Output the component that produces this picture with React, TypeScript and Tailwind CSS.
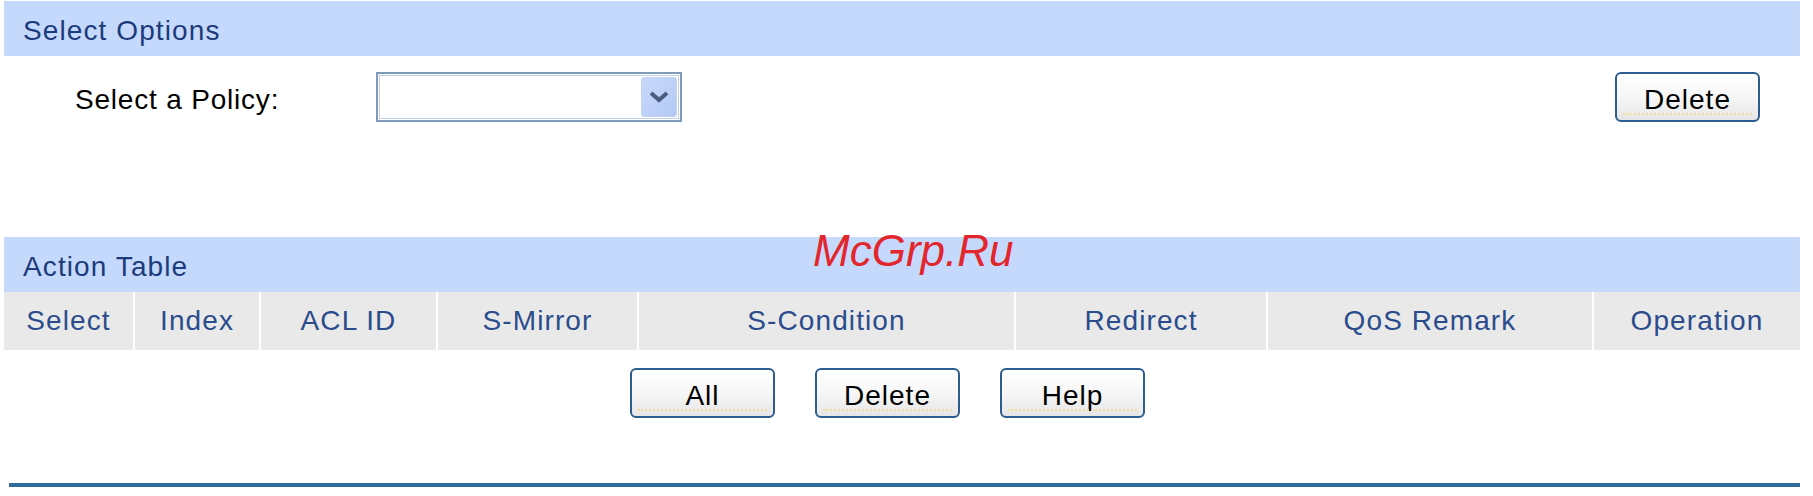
import React from 'react';

const columns = [
  { label: 'Select', w: 'w-[129px]' },
  { label: 'Index', w: 'w-[126px]' },
  { label: 'ACL ID', w: 'w-[177px]' },
  { label: 'S-Mirror', w: 'w-[201px]' },
  { label: 'S-Condition', w: 'w-[377px]' },
  { label: 'Redirect', w: 'w-[252px]' },
  { label: 'QoS Remark', w: 'w-[326px]' },
  { label: 'Operation', w: 'w-[208px]' },
];

function XpButton({ label, className = '' }: { label: string; className?: string }) {
  return (
    <button
      className={`relative w-[145px] h-[50px] pt-[5px] rounded-[6px] border-2 border-[#2b5d8f] bg-gradient-to-b from-white via-[#f7f7f7] to-[#e6e6e6] text-black text-[28px] tracking-[1px] leading-none ${className}`}
    >
      {label}
      <span className="absolute left-[6px] right-[6px] bottom-[5px] border-t-2 border-dotted border-[#f3dc9a]" />
    </button>
  );
}

export default function App() {
  return (
    <div className="relative w-[1813px] h-[496px] bg-white font-['Liberation_Sans',Arial,sans-serif]">
      <div className="pt-px pl-1 w-[1800px]">
        <div className="h-[55px] bg-[#c5d9fd] flex items-center pl-[19px] pt-[4px] text-[28px] tracking-[1.1px] text-[#1c3b7a]">
          Select Options
        </div>

        <div className="mt-[15px] h-[52px] flex items-center">
          <span className="ml-[71px] w-[301px] pt-[6px] text-[28px] tracking-[0.8px] text-black">Select a Policy:</span>
          <div className="w-[306px] h-[50px] border-2 border-[#7f9bbb] shadow-[inset_0_0_0_1px_#fff,inset_0_0_0_2px_#c3d0df] bg-white flex items-center justify-end pr-[3px]">
            <div className="w-[36px] h-[40px] rounded-[3px] bg-gradient-to-br from-[#c9d8fa] to-[#b3c9f6] border border-[#c2d3f4] flex items-center justify-center">
              <svg width="22" height="14" viewBox="0 0 22 14">
                <path d="M3 3 L11 10 L19 3" fill="none" stroke="#4b5d7f" strokeWidth="4" />
              </svg>
            </div>
          </div>
          <XpButton label="Delete" className="ml-auto mr-[40px]" />
        </div>

        <div className="mt-[114px] h-[55px] bg-[#c5d9fd] flex items-center pl-[19px] pt-[4px] text-[28px] tracking-[1.1px] text-[#1c3b7a]">
          Action Table
        </div>

        <div className="flex h-[58px] bg-[#e9e9e9]">
          {columns.map((c, i) => (
            <div
              key={c.label}
              className={`${c.w} flex items-center justify-center text-[28px] tracking-[1.1px] text-[#2b4c8c] ${
                i > 0 ? 'border-l-2 border-white' : ''
              }`}
            >
              {c.label}
            </div>
          ))}
        </div>

        <div className="mt-[18px] flex pl-[626px] gap-[40px]">
          <XpButton label="All" />
          <XpButton label="Delete" />
          <XpButton label="Help" />
        </div>

        <div className="mt-[65px] ml-[5px] w-[1791px] h-[4px] bg-[#2f6a9c]" />
      </div>

      <div className="absolute left-[813px] top-[218px] text-[44px] italic text-[#e3262b] font-['Liberation_Sans',Arial,sans-serif]">
        McGrp.Ru
      </div>
    </div>
  );
}
